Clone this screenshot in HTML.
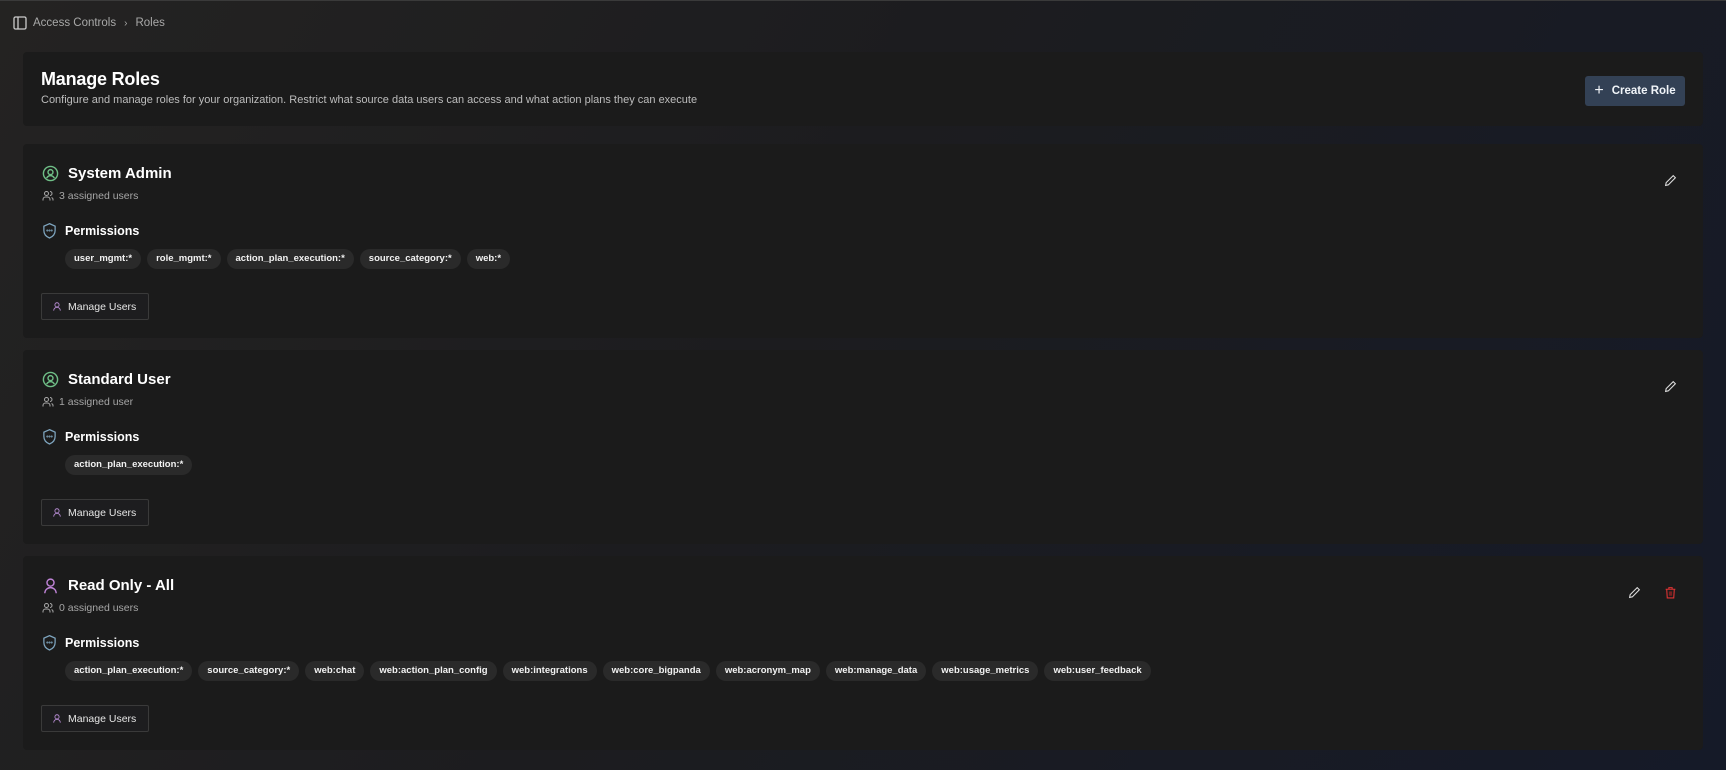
<!DOCTYPE html>
<html><head><meta charset="utf-8"><style>
*{box-sizing:border-box;margin:0;padding:0}
body{width:1726px;height:770px;overflow:hidden;font-family:"Liberation Sans",sans-serif;color:#fff;background:linear-gradient(120deg,#242322 0%,#1c1c1f 45%,#151a28 100%);position:relative}
.topline{position:absolute;left:0;top:0;width:100%;height:1px;background:#3a3a3a}
.bc{position:absolute;left:13px;top:16px;display:flex;align-items:center;font-size:11.5px;color:#a8a8a8}
.bc svg{margin-right:6px}
.card{position:absolute;left:23px;width:1680px;background:#1b1b1b;border-radius:4px}
.h1{position:absolute;left:18px;top:17px;font-size:18px;font-weight:bold;letter-spacing:-0.2px}
.sub{position:absolute;left:18px;top:42px;font-size:11px;color:#bdbdbd}
.btn{position:absolute;right:18px;top:24px;width:100px;height:30px;background:#334155;border-radius:3px;font-size:11.5px;font-weight:bold;display:flex;align-items:center;justify-content:center;gap:8px;color:#f1f5f9}
.title{position:absolute;left:19px;top:21px;display:flex;align-items:center;font-size:15px;font-weight:bold}
.title svg{margin-right:9px}
.users{position:absolute;left:19px;top:46px;font-size:10.5px;color:#a6a6a6;display:flex;align-items:center}
.users svg{margin-right:5px}
.perm{position:absolute;left:19px;top:78px;font-size:12.5px;font-weight:bold;display:flex;align-items:center}
.perm svg{margin-right:8px}
.chips{position:absolute;left:42px;top:105px;display:flex;gap:6px}
.chip{height:20px;padding:0 9px;border-radius:10px;background:#2a2a2a;font-size:9.5px;font-weight:bold;line-height:20px;color:#f2f2f2}
.mu{position:absolute;left:18px;top:149px;width:108px;height:27px;border:1px solid #3a3a3a;background:#1d1d1f;border-radius:2px;font-size:10.5px;color:#e5e5e5;display:flex;align-items:center;padding-left:10px}
.mu svg{margin-right:6px}
.ic{position:absolute;top:30px}
</style></head><body>
<div class="topline"></div>
<div class="bc"><svg width="14" height="14" viewBox="0 0 14 14" fill="none" stroke="#ccc" stroke-width="1.3"><rect x="1" y="1" width="12" height="12" rx="1.5"/><line x1="5" y1="1" x2="5" y2="13"/></svg>Access Controls<span style="margin:0 8px;font-size:10px">›</span>Roles</div>

<div class="card" style="top:52px;height:74px">
<div class="h1">Manage Roles</div>
<div class="sub">Configure and manage roles for your organization. Restrict what source data users can access and what action plans they can execute</div>
<div class="btn"><span style="font-size:16px;font-weight:normal">+</span>Create Role</div>
</div>

<div class="card" style="top:144px;height:194px">
<div class="title"><svg width="17" height="17" viewBox="0 0 24 24" fill="none" stroke="#6fbf87" stroke-width="2"><circle cx="12" cy="12" r="10"/><circle cx="12" cy="10" r="3.5"/><path d="M6.5 18.5c1.5-2.5 3.5-3.5 5.5-3.5s4 1 5.5 3.5"/></svg>System Admin</div>
<div class="users"><svg width="12" height="12" viewBox="0 0 24 24" fill="none" stroke="#aaa" stroke-width="2"><circle cx="9" cy="7" r="4"/><path d="M2 21v-2a5 5 0 0 1 5-5h4a5 5 0 0 1 5 5v2M16 3a4 4 0 0 1 0 8M22 21v-2a4 4 0 0 0-3-3.9"/></svg>3 assigned users</div>
<div class="perm"><svg width="15" height="17" viewBox="0 0 24 26" fill="none" stroke="#7fa6c0" stroke-width="2"><path d="M12 2l9 4v7c0 6-4 10-9 12-5-2-9-6-9-12V6z"/><circle cx="8.5" cy="13" r=".6"/><circle cx="12" cy="13" r=".6"/><circle cx="15.5" cy="13" r=".6"/></svg>Permissions</div>
<div class="chips"><span class="chip">user_mgmt:*</span><span class="chip">role_mgmt:*</span><span class="chip">action_plan_execution:*</span><span class="chip">source_category:*</span><span class="chip">web:*</span></div>
<div class="mu"><svg width="10" height="11" viewBox="0 0 24 24" fill="none" stroke="#b48ad0" stroke-width="2.2"><circle cx="12" cy="8" r="5"/><path d="M4 22c0-5 4-8 8-8s8 3 8 8"/></svg>Manage Users</div>
<svg class="ic" style="left:1641px" width="13" height="13" viewBox="0 0 24 24" fill="none" stroke="#ddd" stroke-width="2"><path d="M17 3l4 4L8 20l-5 1 1-5z"/></svg>
</div>

<div class="card" style="top:350px;height:194px">
<div class="title"><svg width="17" height="17" viewBox="0 0 24 24" fill="none" stroke="#6fbf87" stroke-width="2"><circle cx="12" cy="12" r="10"/><circle cx="12" cy="10" r="3.5"/><path d="M6.5 18.5c1.5-2.5 3.5-3.5 5.5-3.5s4 1 5.5 3.5"/></svg>Standard User</div>
<div class="users"><svg width="12" height="12" viewBox="0 0 24 24" fill="none" stroke="#aaa" stroke-width="2"><circle cx="9" cy="7" r="4"/><path d="M2 21v-2a5 5 0 0 1 5-5h4a5 5 0 0 1 5 5v2M16 3a4 4 0 0 1 0 8M22 21v-2a4 4 0 0 0-3-3.9"/></svg>1 assigned user</div>
<div class="perm"><svg width="15" height="17" viewBox="0 0 24 26" fill="none" stroke="#7fa6c0" stroke-width="2"><path d="M12 2l9 4v7c0 6-4 10-9 12-5-2-9-6-9-12V6z"/><circle cx="8.5" cy="13" r=".6"/><circle cx="12" cy="13" r=".6"/><circle cx="15.5" cy="13" r=".6"/></svg>Permissions</div>
<div class="chips"><span class="chip">action_plan_execution:*</span></div>
<div class="mu"><svg width="10" height="11" viewBox="0 0 24 24" fill="none" stroke="#b48ad0" stroke-width="2.2"><circle cx="12" cy="8" r="5"/><path d="M4 22c0-5 4-8 8-8s8 3 8 8"/></svg>Manage Users</div>
<svg class="ic" style="left:1641px" width="13" height="13" viewBox="0 0 24 24" fill="none" stroke="#ddd" stroke-width="2"><path d="M17 3l4 4L8 20l-5 1 1-5z"/></svg>
</div>

<div class="card" style="top:556px;height:194px">
<div class="title"><svg width="17" height="17" viewBox="0 0 24 24" fill="none" stroke="#c084d8" stroke-width="2"><circle cx="12" cy="8" r="5"/><path d="M4 23c0-5 4-8 8-8s8 3 8 8"/></svg>Read Only - All</div>
<div class="users"><svg width="12" height="12" viewBox="0 0 24 24" fill="none" stroke="#aaa" stroke-width="2"><circle cx="9" cy="7" r="4"/><path d="M2 21v-2a5 5 0 0 1 5-5h4a5 5 0 0 1 5 5v2M16 3a4 4 0 0 1 0 8M22 21v-2a4 4 0 0 0-3-3.9"/></svg>0 assigned users</div>
<div class="perm"><svg width="15" height="17" viewBox="0 0 24 26" fill="none" stroke="#7fa6c0" stroke-width="2"><path d="M12 2l9 4v7c0 6-4 10-9 12-5-2-9-6-9-12V6z"/><circle cx="8.5" cy="13" r=".6"/><circle cx="12" cy="13" r=".6"/><circle cx="15.5" cy="13" r=".6"/></svg>Permissions</div>
<div class="chips"><span class="chip">action_plan_execution:*</span><span class="chip">source_category:*</span><span class="chip">web:chat</span><span class="chip">web:action_plan_config</span><span class="chip">web:integrations</span><span class="chip">web:core_bigpanda</span><span class="chip">web:acronym_map</span><span class="chip">web:manage_data</span><span class="chip">web:usage_metrics</span><span class="chip">web:user_feedback</span></div>
<div class="mu"><svg width="10" height="11" viewBox="0 0 24 24" fill="none" stroke="#b48ad0" stroke-width="2.2"><circle cx="12" cy="8" r="5"/><path d="M4 22c0-5 4-8 8-8s8 3 8 8"/></svg>Manage Users</div>
<svg class="ic" style="left:1605px" width="13" height="13" viewBox="0 0 24 24" fill="none" stroke="#ddd" stroke-width="2"><path d="M17 3l4 4L8 20l-5 1 1-5z"/></svg>
<svg class="ic" style="left:1641px" width="13" height="13" viewBox="0 0 24 24" fill="none" stroke="#d33" stroke-width="2"><path d="M3 6h18M9 6V3h6v3M5 6l1 16h12l1-16"/><rect x="9" y="10" width="6" height="8" fill="#7a2020" stroke="none"/></svg>
</div>
</body></html>
